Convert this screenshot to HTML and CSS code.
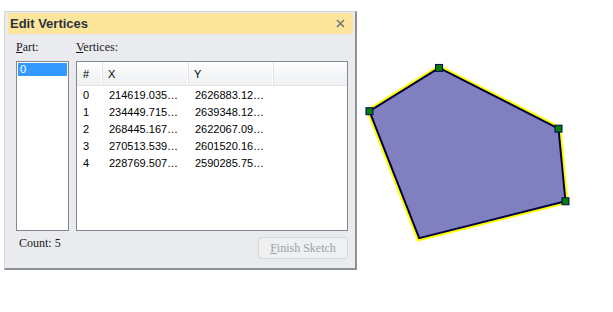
FILE: index.html
```html
<!DOCTYPE html>
<html>
<head>
<meta charset="utf-8">
<link rel="stylesheet" href="styles.css">
</head>
<body>
<div class="page">
  <div class="dialog">
    <div class="titlebar">
      <span class="title">Edit Vertices</span>
      <svg class="close" width="9" height="9" viewBox="0 0 9 9"><path d="M1 1 L8 8 M8 1 L1 8" stroke="#6f7378" stroke-width="1.5"/></svg>
    </div>
    <div class="body">
      <div class="label"><u>P</u>art:</div>
      <div class="label"><u>V</u>ertices:</div>
      <div class="partlist">
        <div class="part sel">0</div>
      </div>
      <div class="vlist">
        <div class="vhead">
          <div class="hc c-idx">#</div>
          <div class="hc c-x">X</div>
          <div class="hc c-y">Y</div>
          <div class="hc c-rest"></div>
        </div>
        <div class="vrows">
          <div class="vrow"><span class="c-idx">0</span><span class="c-x">214619.035…</span><span class="c-y">2626883.12…</span></div>
          <div class="vrow"><span class="c-idx">1</span><span class="c-x">234449.715…</span><span class="c-y">2639348.12…</span></div>
          <div class="vrow"><span class="c-idx">2</span><span class="c-x">268445.167…</span><span class="c-y">2622067.09…</span></div>
          <div class="vrow"><span class="c-idx">3</span><span class="c-x">270513.539…</span><span class="c-y">2601520.16…</span></div>
          <div class="vrow"><span class="c-idx">4</span><span class="c-x">228769.507…</span><span class="c-y">2590285.75…</span></div>
        </div>
      </div>
      <div class="count">Count: 5</div>
      <div class="btnrow"><button class="btn" disabled><u>F</u>inish Sketch</button></div>
    </div>
  </div>
  <svg class="canvas" width="257" height="312" viewBox="0 0 257 312">
    <polygon points="82.5,67.5 202.5,128.5 209.5,201.5 62.5,238.5 12.5,111" fill="none" stroke="#ffff00" stroke-width="6" stroke-linejoin="miter"/>
    <polygon points="82.5,67.5 202.5,128.5 209.5,201.5 62.5,238.5 12.5,111" fill="#8080c0" stroke="#000040" stroke-width="2"/>
    <rect x="79" y="64" width="7" height="7" fill="#008000" stroke="#000060" stroke-width="1"/>
    <rect x="199" y="125" width="7" height="7" fill="#008000" stroke="#000060" stroke-width="1"/>
    <rect x="206" y="198" width="7" height="7" fill="#008000" stroke="#000060" stroke-width="1"/>
    <rect x="9" y="107.5" width="7" height="7" fill="#008000" stroke="#000060" stroke-width="1"/>
  </svg>
</div>
</body>
</html>
```
FILE: styles.css
```css
html, body {
  margin: 0;
  padding: 0;
  background: #ffffff;
}
.page {
  display: flex;
  align-items: flex-start;
  width: 613px;
  height: 312px;
}
.dialog {
  margin: 11px 0 0 4px;
  width: 349px;
  height: 255px;
  background: #e9ebee;
  border-left: 1px solid #d2d5da;
  border-top: 1px solid #d2d5da;
  border-right: 2px solid #8d9196;
  border-bottom: 2px solid #8d9196;
  padding: 1px 0 0 3px;
  box-sizing: content-box;
}
.titlebar {
  display: flex;
  align-items: center;
  justify-content: space-between;
  width: 345px;
  height: 21px;
  background: #fee59c;
  box-sizing: border-box;
  padding: 0 8px 0 2px;
}
.title {
  font-family: "Liberation Sans", Arial, sans-serif;
  font-weight: bold;
  font-size: 13px;
  color: #2b323b;
}
.close {
  display: block;
}
.body {
  display: grid;
  grid-template-columns: 53px 272px;
  grid-template-rows: 27px 170px 28px;
  column-gap: 7px;
  padding-left: 8px;
}
.label {
  font-family: "Liberation Serif", "Times New Roman", serif;
  font-size: 12px;
  color: #1a1a1a;
  padding-top: 6px;
  line-height: 14px;
}
.label u { text-decoration-thickness: 1px; text-underline-offset: 1px; }
.partlist {
  background: #ffffff;
  border: 1px solid #828790;
  padding: 1px;
}
.part {
  font-family: "Liberation Sans", Arial, sans-serif;
  font-size: 11px;
  line-height: 13px;
  height: 13px;
  padding-left: 2px;
}
.part.sel {
  background: #3399ff;
  color: #ffffff;
}
.vlist {
  background: #ffffff;
  border: 1px solid #828790;
  font-family: "Liberation Sans", Arial, sans-serif;
  font-size: 11px;
  color: #000;
}
.vhead {
  display: flex;
  height: 23px;
  width: 270px;
  background: linear-gradient(#ffffff, #f6f7f8 45%, #eef0f2);
  border-bottom: 1px solid #e4e6e8;
}
.hc {
  display: flex;
  align-items: center;
  border-right: 1px solid #e1e3e6;
  box-shadow: inset -1px 0 0 #ffffff;
  box-sizing: border-box;
  height: 23px;
  padding-left: 5px;
}
.vhead .c-idx { width: 26px; padding-left: 6px; }
.vhead .c-x { width: 86px; }
.vhead .c-y { width: 85px; }
.vhead .c-rest { width: 73px; border-right: none; box-shadow: none; }
.vrows {
  padding-top: 1px;
}
.vrow {
  display: flex;
  height: 17px;
  line-height: 17px;
}
.vrow span { display: block; }
.vrow .c-idx { width: 26px; padding-left: 6px; box-sizing: border-box; }
.vrow .c-x { width: 86px; padding-left: 6px; box-sizing: border-box; }
.vrow .c-y { width: 85px; padding-left: 6px; box-sizing: border-box; }
.count {
  font-family: "Liberation Serif", "Times New Roman", serif;
  font-size: 12px;
  color: #1a1a1a;
  padding: 5px 0 0 3px;
  white-space: nowrap;
}
.btnrow {
  display: flex;
  justify-content: flex-end;
  padding-top: 6px;
}
.btn {
  width: 90px;
  height: 22px;
  margin: 0;
  border: 1px solid #d5d8dc;
  border-radius: 3px;
  background: #eef0f2;
  font-family: "Liberation Serif", "Times New Roman", serif;
  font-size: 12px;
  color: #9da1a6;
  padding: 0;
}
```
